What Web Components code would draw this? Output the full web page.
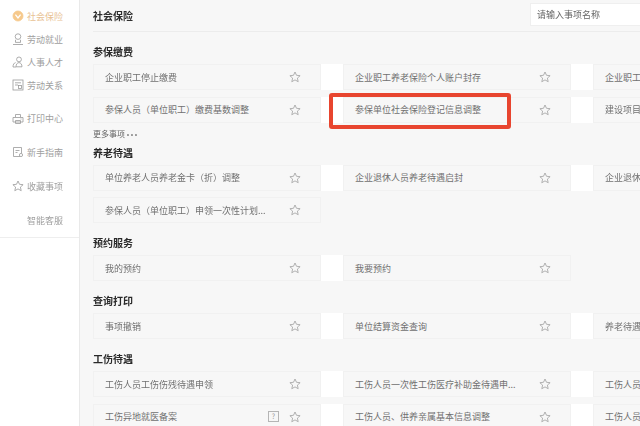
<!DOCTYPE html>
<html lang="zh">
<head>
<meta charset="utf-8">
<title>社会保险</title>
<style>
  html, body { margin: 0; height: 426px; overflow: hidden; background: #f7f7f7; }
  body { font-family: "Noto Sans CJK SC", "Noto Sans", sans-serif; }
</style>
</head>
<body>
<app-shell>
  <side-nav slot="nav">
    <nav-item icon="shield" active>社会保险</nav-item>
    <nav-item icon="person">劳动就业</nav-item>
    <nav-item icon="people">人事人才</nav-item>
    <nav-item icon="doc">劳动关系</nav-item>
    <nav-item icon="printer" wide first>打印中心</nav-item>
    <nav-item icon="guide" wide>新手指南</nav-item>
    <nav-item icon="star" wide>收藏事项</nav-item>
    <nav-item wide>智能客服</nav-item>
  </side-nav>

  <page-header>社会保险</page-header>

  <item-section label="参保缴费" more>
    <item-card gap>企业职工停止缴费</item-card>
    <item-card gap>企业职工养老保险个人账户封存</item-card>
    <item-card>企业职工</item-card>
    <item-card gap>参保人员（单位职工）缴费基数调整</item-card>
    <item-card gap>参保单位社会保险登记信息调整</item-card>
    <item-card>建设项目</item-card>
  </item-section>

  <item-section label="养老待遇">
    <item-card gap>单位养老人员养老金卡（折）调整</item-card>
    <item-card gap>企业退休人员养老待遇启封</item-card>
    <item-card>企业退休</item-card>
    <item-card>参保人员（单位职工）申领一次性计划...</item-card>
  </item-section>

  <item-section label="预约服务">
    <item-card gap>我的预约</item-card>
    <item-card>我要预约</item-card>
  </item-section>

  <item-section label="查询打印">
    <item-card gap>事项撤销</item-card>
    <item-card gap>单位结算资金查询</item-card>
    <item-card>养老待遇</item-card>
  </item-section>

  <item-section label="工伤待遇">
    <item-card gap>工伤人员工伤伤残待遇申领</item-card>
    <item-card gap>工伤人员一次性工伤医疗补助金待遇申...</item-card>
    <item-card>工伤人员</item-card>
    <item-card gap help>工伤异地就医备案</item-card>
    <item-card gap>工伤人员、供养亲属基本信息调整</item-card>
    <item-card>工伤人员</item-card>
  </item-section>

  <mark-box slot="overlay"></mark-box>
</app-shell>

<script>
const ICONS = {
  shield: '<circle cx="6" cy="6" r="5" fill="#f6c98c" stroke="#f6c98c"/><path d="M3.4 4.6 6 8l2.6-3.4" fill="none" stroke="#fff" stroke-width="1.3"/>',
  person: '<circle cx="6" cy="3.6" r="2.8"/><path d="M3.5 6.8v2.6h5V6.8M1 11.5h10"/>',
  people: '<circle cx="7" cy="3.4" r="2.4"/><path d="M4 10.8c0-2.6 1.4-4.2 3-4.2s3 1.6 3 4.2zM3.6 6.6C2 7 1 8.4 1 11h3"/>',
  doc: '<rect x="1" y="1" width="10" height="10"/><path d="M3 3.8h6M3 6h3"/><rect x="6.5" y="6.5" width="3" height="3"/>',
  printer: '<path d="M3.5 4V1.5h5V4M1 4.5h10V9H1zM3.5 7.5h5v3h-5zM8.5 6h1"/>',
  guide: '<path d="M8 10.5H1.5v-9h8V7M3.5 4.5h4M3.5 6.5h2"/><circle cx="9" cy="9" r="1.6"/>',
  star: '<path d="M6 1l1.5 3.3 3.6.4-2.7 2.4.8 3.6L6 8.9l-3.2 1.8.8-3.6L.9 4.7l3.6-.4z"/>'
};

class AppShell extends HTMLElement {
  constructor() {
    super();
    this.attachShadow({ mode: 'open' }).innerHTML = `
      <style>
        :host { display: grid; grid-template-columns: 80px 1fr; width: 640px; height: 426px; overflow: hidden; position: relative; filter: blur(.4px); }
        main { min-width: 0; padding-left: 13px; overflow: hidden; }
      </style>
      <slot name="nav"></slot>
      <main><slot></slot></main>
      <slot name="overlay"></slot>`;
  }
}

class SideNav extends HTMLElement {
  constructor() {
    super();
    this.attachShadow({ mode: 'open' }).innerHTML = `
      <style>
        :host { display: block; height: 426px; box-sizing: border-box; border-right: 1px solid #e9e9e9; background: #fff; }
        div { display: flex; flex-direction: column; padding-top: 5px; height: 238px; background: #fff; border-bottom: 1px solid #eee; box-sizing: border-box; }
      </style>
      <div><slot></slot></div>`;
  }
}

class NavItem extends HTMLElement {
  constructor() {
    super();
    const icon = ICONS[this.getAttribute('icon')] || '';
    this.attachShadow({ mode: 'open' }).innerHTML = `
      <style>
        :host { display: flex; align-items: center; justify-content: flex-end; gap: 3px; height: 23px; padding-right: 16px; font-size: 9px; color: #a0a0a0; }
        :host([wide]) { height: 34px; }
        :host([first]) { margin-top: 5px; }
        :host([active]) { color: #e8c294; }
        svg { width: 12px; height: 12px; fill: none; stroke: #999; stroke-width: .8; flex: none; }
      </style>
      ${icon ? `<svg viewBox="0 0 12 12">${icon}</svg>` : ''}<slot></slot>`;
  }
}

class PageHeader extends HTMLElement {
  constructor() {
    super();
    this.attachShadow({ mode: 'open' }).innerHTML = `
      <style>
        :host { display: flex; align-items: center; justify-content: space-between; height: 32px; box-sizing: border-box; margin-bottom: 12px; border-bottom: 1px solid #ececec; }
        h1 { margin: 0; font-size: 10px; line-height: 14px; color: #2e2e2e; margin-top: 1px; }
        .search { width: 110px; height: 23px; box-sizing: border-box; padding-left: 6px; margin-bottom: 2px; background: #fff; border: 1px solid #efefef; border-right: 0; font-size: 9px; line-height: 21px; color: #666; }
      </style>
      <h1><slot></slot></h1>
      <div class="search">请输入事项名称</div>`;
  }
}

class ItemSection extends HTMLElement {
  constructor() {
    super();
    const more = this.hasAttribute('more') ? '<div class="more">更多事项 <span>•••</span></div>' : '';
    this.attachShadow({ mode: 'open' }).innerHTML = `
      <style>
        :host { display: block; margin-bottom: 12px; }
        :host([more]) { margin-bottom: 0; }
        h2 { margin: 0 0 5px; font-size: 10px; line-height: 15px; color: #2a2a2a; }
        .grid { display: grid; grid-template-columns: repeat(3, 250px); row-gap: 6.5px; }
        .more { height: 22px; line-height: 21px; font-size: 8px; color: #666; }
        .more span { font-family: "Liberation Sans", sans-serif; font-size: 7px; letter-spacing: 1.5px; color: #888; }
      </style>
      <h2>${this.getAttribute('label')}</h2>
      <div class="grid"><slot></slot></div>${more}`;
  }
}

class StarIcon extends HTMLElement {
  constructor() {
    super();
    this.attachShadow({ mode: 'open' }).innerHTML = `
      <style>
        :host { display: block; width: 12px; height: 12px; flex: none; }
        svg { display: block; width: 12px; height: 12px; fill: none; stroke: #a0a0a0; stroke-width: .8; }
      </style>
      <svg viewBox="0 0 12 12">${ICONS.star}</svg>`;
  }
}

class ItemCard extends HTMLElement {
  constructor() {
    super();
    const help = this.hasAttribute('help') ? '<span class="help">?</span>' : '';
    this.attachShadow({ mode: 'open' }).innerHTML = `
      <style>
        :host { display: flex; height: 26px; width: 250px; }
        :host([gap]) { background: #fff; }
        .card { display: flex; align-items: center; width: 228px; flex: none; box-sizing: border-box; padding: 0 19px 0 11px; background: #f7f7f7; border: 1px solid #f1f1f1; font-size: 9px; color: #707070; }
        .text { flex: 1; min-width: 0; white-space: nowrap; }
        .help { width: 11px; height: 11px; margin-right: 10px; box-sizing: border-box; border: 1px solid #b5b5b5; font-size: 7px; line-height: 9px; text-align: center; color: #999; }
      </style>
      <div class="card"><span class="text"><slot></slot></span>${help}<star-icon></star-icon></div>`;
  }
}

class MarkBox extends HTMLElement {
  constructor() {
    super();
    this.attachShadow({ mode: 'open' }).innerHTML = `
      <style>
        :host { position: absolute; left: 329px; top: 93px; width: 182px; height: 36px; box-sizing: border-box; border: 4px solid #e8452f; border-radius: 3px; }
      </style>`;
  }
}

customElements.define('star-icon', StarIcon);
customElements.define('nav-item', NavItem);
customElements.define('side-nav', SideNav);
customElements.define('page-header', PageHeader);
customElements.define('item-card', ItemCard);
customElements.define('item-section', ItemSection);
customElements.define('mark-box', MarkBox);
customElements.define('app-shell', AppShell);
</script>
</body>
</html>
